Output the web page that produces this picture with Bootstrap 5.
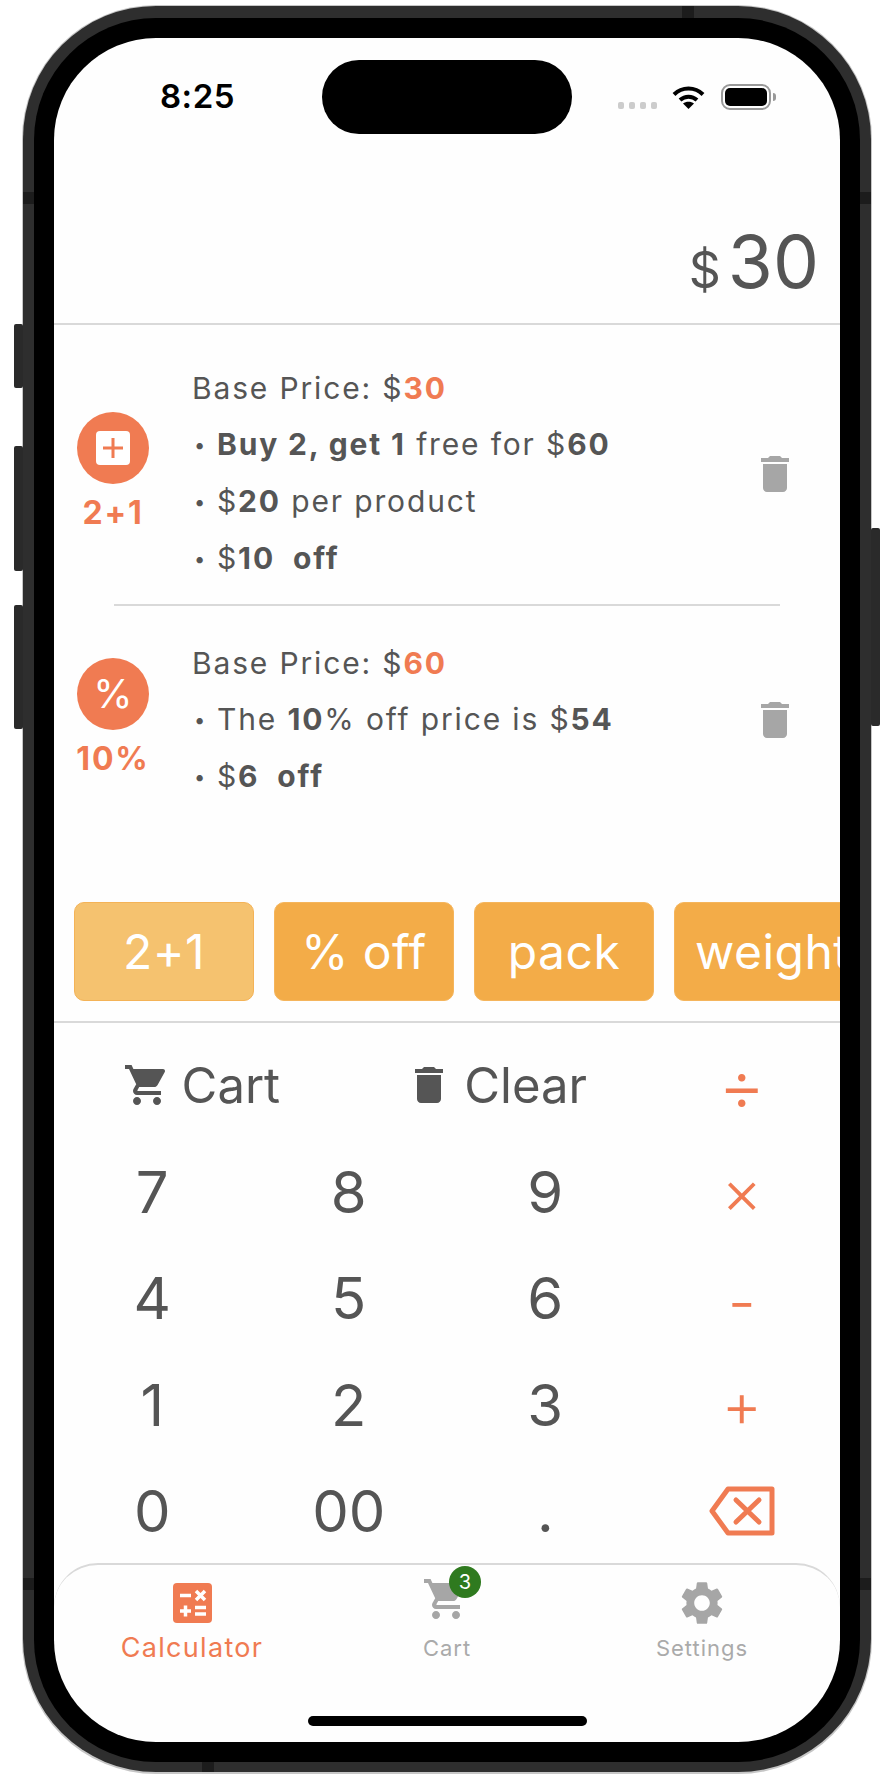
<!DOCTYPE html>
<html lang="en">
<head>
    <meta charset="UTF-8">
    <meta name="viewport" content="width=device-width, initial-scale=1.0">
    <title>Discount Calculator</title>
    <link href="https://cdn.jsdelivr.net/npm/bootstrap@5.3.0/dist/css/bootstrap.min.css" rel="stylesheet">
    <style>
        body {
            background: #fff;
            font-family: "Inter", "Liberation Sans", sans-serif;
            color: #555;
        }
        /* phone frame */
        .phone-edge {
            position: relative;
            width: 850px;
            height: 1769px;
            margin: 5px auto 0;
            padding: 1px 1px 2px;
            background: #c6c6c6;
            border-radius: 134px;
        }
        .phone-band {
            height: 100%;
            padding: 12px 11px 10px;
            background: #2e2e2e;
            border-radius: 133px;
        }
        .phone-black {
            height: 100%;
            padding: 20px;
            background: #000;
            border-radius: 122px;
        }
        .phone-screen {
            height: 100%;
            background: #fefefe;
            border-radius: 102px;
            overflow: hidden;
        }
        .side-key {
            position: absolute;
            width: 9px;
            background: #2a2a2a;
            border-radius: 2px;
        }
        .antenna {
            position: absolute;
            background: #1c1c1c;
        }
        /* status bar */
        .status-row {
            height: 74px;
            margin-top: 22px;
        }
        .status-left {
            width: 268px;
            padding-left: 106px;
            font-size: 33px;
            font-weight: 600;
            letter-spacing: .5px;
            color: #000;
        }
        .island {
            width: 250px;
            height: 74px;
            background: #000;
            border-radius: 37px;
        }
        .status-right {
            margin-left: 46px;
        }
        .sig-dot {
            width: 6px;
            height: 7px;
            background: #ccc;
            border-radius: 2px;
        }
        .sig-dots {
            gap: 5px;
            margin: 16px 15px 0 0;
        }
        .batt-body {
            width: 50px;
            height: 26px;
            padding: 2px;
            border: 2px solid #999;
            border-radius: 9px;
        }
        .batt-fill {
            height: 100%;
            background: #000;
            border-radius: 5px;
        }
        .batt-tip {
            width: 3px;
            height: 8px;
            margin-left: 2px;
            background: #999;
            border-radius: 0 3px 3px 0;
        }
        /* total */
        .total-row {
            height: 191px;
            padding: 91px 21px 0 0;
            border-bottom: 2px solid #d9d9d9;
        }
        .total-cur {
            margin-right: 7px;
            font-size: 50px;
            line-height: 1;
        }
        .total-num {
            font-size: 73px;
            line-height: 1;
        }
        /* discount list */
        .price-list {
            height: 556px;
            padding-top: 35px;
            font-size: 30px;
            line-height: 56px;
            letter-spacing: 1.85px;
        }
        .price-item {
            padding-right: 41px;
        }
        .price-item b {
            font-weight: 700;
        }
        .price-hot {
            color: #f07b52;
            font-weight: 700;
        }
        .type-col {
            width: 116px;
            margin: 0 21px 5px 1px;
        }
        .type-circle {
            width: 72px;
            height: 72px;
            background: #f07b52;
            color: #fff;
            font-size: 40px;
            line-height: 1;
            letter-spacing: 0;
        }
        .type-name {
            margin-top: 11px;
            font-size: 32px;
            color: #f07b52;
            font-weight: 700;
            line-height: 36px;
        }
        .item-line {
            height: 2px;
            margin: 17px 60px 29px;
            background: #d9d9d9;
        }
        .bullet {
            display: inline-block;
            width: 25px;
            padding-left: 2px;
            font-size: 20px;
            vertical-align: 3px;
        }
        /* discount buttons */
        .type-btns {
            height: 142px;
            padding: 21px 0 0 20px;
            gap: 20px;
            border-bottom: 2px solid #d9d9d9;
            overflow: hidden;
        }
        .type-btn {
            flex: 0 0 180px;
            height: 99px;
            padding: 0;
            font-size: 48px;
            line-height: 1;
            letter-spacing: .5px;
            color: #fff;
            background: #f3ac48;
            border: 1px solid #f5b55c;
            border-radius: 10px;
            white-space: nowrap;
            overflow: hidden;
        }
        .type-btn.btn-clip {
            text-align: left;
            padding-left: 20px;
        }
        .type-btn.btn-soft {
            background: #f5c26f;
            border-color: #f4b357;
        }
        /* keypad */
        .key-pad {
            padding-top: 9px;
        }
        .key-cell {
            height: 106.5px;
            font-size: 58px;
            line-height: 1;
        }
        .key-action {
            font-size: 49px;
            gap: 11px;
        }
        .key-op {
            font-size: 62px;
            font-weight: 350;
            color: #f07b52;
        }
        .op-div {
            font-size: 72px;
        }
        .op-minus {
            padding-top: 7px;
        }
        /* tab bar */
        .tab-bar {
            height: 180px;
            margin-top: -2px;
            padding-top: 12px;
            border-top: 2px solid #d9d9d9;
            border-radius: 44px 44px 0 0;
        }
        .tab-item {
            width: 255px;
            font-size: 22px;
            letter-spacing: 1px;
            color: #aaa;
        }
        .tab-on {
            font-size: 27px;
            letter-spacing: 1.3px;
            color: #f07b52;
        }
        .tab-icon {
            height: 52px;
        }
        .tab-text {
            margin-top: 1px;
            line-height: 36px;
        }
        .cart-icon {
            display: block;
            margin: -2px 0 0 -2px;
        }
        .cart-count {
            top: -11px;
            left: 25px;
            width: 32px;
            height: 32px;
            background: #2f7a1f;
            color: #fff;
            font-size: 20px;
            letter-spacing: 0;
        }
        .home-bar {
            width: 279px;
            height: 10px;
            margin: 0 auto;
            background: #000;
            border-radius: 5px;
        }
        .home-wrap {
            padding-top: 50px;
        }
    </style>
</head>
<body>
    <div class="phone-edge">
        <!-- side keys -->
        <div class="side-key" style="left:-8px;top:319px;height:64px"></div>
        <div class="side-key" style="left:-8px;top:441px;height:125px"></div>
        <div class="side-key" style="left:-8px;top:600px;height:124px"></div>
        <div class="side-key" style="right:-8px;top:523px;height:198px"></div>
        <!-- antenna lines -->
        <div class="antenna" style="left:660px;top:1px;width:12px;height:12px"></div>
        <div class="antenna" style="left:180px;bottom:2px;width:12px;height:10px"></div>
        <div class="antenna" style="left:1px;top:187px;width:11px;height:12px"></div>
        <div class="antenna" style="right:1px;top:187px;width:11px;height:12px"></div>
        <div class="antenna" style="left:1px;top:1573px;width:11px;height:12px"></div>
        <div class="antenna" style="right:1px;top:1573px;width:11px;height:12px"></div>

        <div class="phone-band">
            <div class="phone-black">
                <div class="phone-screen d-flex flex-column">
                    <!-- status bar -->
                    <div class="status-row d-flex align-items-center flex-shrink-0">
                        <div class="status-left">8:25</div>
                        <div class="island"></div>
                        <div class="status-right d-flex align-items-center">
                            <div class="sig-dots d-flex">
                                <span class="sig-dot"></span><span class="sig-dot"></span><span class="sig-dot"></span><span class="sig-dot"></span>
                            </div>
                            <svg width="33" height="24" viewBox="0 0 33 24" class="me-3">
                                <path d="M2 9.5C10 1.5 23 1.5 31 9.5" fill="none" stroke="#000" stroke-width="4"/>
                                <path d="M8 15C13 10.500 20 10.500 25 15" fill="none" stroke="#000" stroke-width="4"/>
                                <path d="M16.500 24L11 18.500C14 16 19 16 22 18.500Z" fill="#000"/>
                            </svg>
                            <div class="batt-body"><div class="batt-fill"></div></div>
                            <div class="batt-tip"></div>
                        </div>
                    </div>

                    <!-- total -->
                    <div class="total-row d-flex justify-content-end align-items-baseline flex-shrink-0">
                        <span class="total-cur">$</span><span class="total-num">30</span>
                    </div>

                    <!-- discounts -->
                    <div class="price-list flex-shrink-0">
                        <div class="price-item d-flex align-items-center">
                            <div class="type-col d-flex flex-column align-items-center flex-shrink-0">
                                <div class="type-circle rounded-circle d-flex align-items-center justify-content-center">
                                    <svg width="34" height="34" viewBox="0 0 34 34">
                                        <rect width="34" height="34" rx="4" fill="#fff"/>
                                        <path d="M17 7V27M7 17H27" stroke="#f07b52" stroke-width="3"/>
                                    </svg>
                                </div>
                                <div class="type-name">2+1</div>
                            </div>
                            <div class="flex-grow-1">
                                <div>Base Price: $<span class="price-hot">30</span></div>
                                <div><span class="bullet">•</span><b>Buy 2, get 1</b> free for $<b>60</b></div>
                                <div><span class="bullet">•</span>$<b>20</b> per product</div>
                                <div><span class="bullet">•</span>$<b>10&nbsp; off</b></div>
                            </div>
                            <svg width="48" height="48" viewBox="0 0 24 24" fill="#a6a6a6">
                                <path d="M6 19c0 1.100.9 2 2 2h8c1.100 0 2-.9 2-2V7H6v12zM19 4h-3.500l-1-1h-5l-1 1H5v2h14V4z"/>
                            </svg>
                        </div>
                        <div class="item-line"></div>
                        <div class="price-item d-flex align-items-center">
                            <div class="type-col d-flex flex-column align-items-center flex-shrink-0">
                                <div class="type-circle rounded-circle d-flex align-items-center justify-content-center">%</div>
                                <div class="type-name">10%</div>
                            </div>
                            <div class="flex-grow-1">
                                <div>Base Price: $<span class="price-hot">60</span></div>
                                <div><span class="bullet">•</span>The <b>10</b>% off price is $<b>54</b></div>
                                <div><span class="bullet">•</span>$<b>6&nbsp; off</b></div>
                            </div>
                            <svg width="48" height="48" viewBox="0 0 24 24" fill="#a6a6a6">
                                <path d="M6 19c0 1.100.9 2 2 2h8c1.100 0 2-.9 2-2V7H6v12zM19 4h-3.500l-1-1h-5l-1 1H5v2h14V4z"/>
                            </svg>
                        </div>
                    </div>

                    <!-- discount types -->
                    <div class="type-btns d-flex align-items-start flex-shrink-0">
                        <button type="button" class="btn type-btn btn-soft">2+1</button>
                        <button type="button" class="btn type-btn">% off</button>
                        <button type="button" class="btn type-btn">pack</button>
                        <button type="button" class="btn type-btn btn-clip">weight</button>
                    </div>

                    <!-- keypad -->
                    <div class="key-pad flex-shrink-0">
                        <div class="row g-0">
                            <div class="col-9 d-flex">
                                <div class="w-50 key-cell key-action d-flex align-items-center justify-content-center">
                                    <svg width="48" height="48" viewBox="0 0 24 24" fill="#555">
                                        <path d="M7 18c-1.100 0-1.990.9-1.990 2S5.900 22 7 22s2-.9 2-2-.9-2-2-2zM1 2v2h2l3.600 7.590-1.350 2.450c-.16.28-.25.61-.25.96 0 1.100.9 2 2 2h12v-2H7.420c-.14 0-.25-.11-.25-.25l.03-.12.9-1.630h7.450c.75 0 1.410-.41 1.750-1.030l3.580-6.490c.08-.14.12-.31.12-.48 0-.55-.45-1-1-1H5.210l-.94-2H1zm16 16c-1.100 0-1.990.9-1.990 2s.89 2 1.990 2 2-.9 2-2-.9-2-2-2z"/>
                                    </svg>
                                    <span>Cart</span>
                                </div>
                                <div class="w-50 key-cell key-action d-flex align-items-center justify-content-center">
                                    <svg width="48" height="48" viewBox="0 0 24 24" fill="#555">
                                        <path d="M6 19c0 1.100.9 2 2 2h8c1.100 0 2-.9 2-2V7H6v12zM19 4h-3.500l-1-1h-5l-1 1H5v2h14V4z"/>
                                    </svg>
                                    <span>Clear</span>
                                </div>
                            </div>
                            <div class="col-3 key-cell key-op op-div d-flex align-items-center justify-content-center">÷</div>

                            <div class="col-3 key-cell d-flex align-items-center justify-content-center">7</div>
                            <div class="col-3 key-cell d-flex align-items-center justify-content-center">8</div>
                            <div class="col-3 key-cell d-flex align-items-center justify-content-center">9</div>
                            <div class="col-3 key-cell key-op d-flex align-items-center justify-content-center">×</div>

                            <div class="col-3 key-cell d-flex align-items-center justify-content-center">4</div>
                            <div class="col-3 key-cell d-flex align-items-center justify-content-center">5</div>
                            <div class="col-3 key-cell d-flex align-items-center justify-content-center">6</div>
                            <div class="col-3 key-cell key-op op-minus d-flex align-items-center justify-content-center">-</div>

                            <div class="col-3 key-cell d-flex align-items-center justify-content-center">1</div>
                            <div class="col-3 key-cell d-flex align-items-center justify-content-center">2</div>
                            <div class="col-3 key-cell d-flex align-items-center justify-content-center">3</div>
                            <div class="col-3 key-cell key-op d-flex align-items-center justify-content-center">+</div>

                            <div class="col-3 key-cell d-flex align-items-center justify-content-center">0</div>
                            <div class="col-3 key-cell d-flex align-items-center justify-content-center">00</div>
                            <div class="col-3 key-cell d-flex align-items-center justify-content-center">.</div>
                            <div class="col-3 key-cell d-flex align-items-center justify-content-center">
                                <svg width="66" height="50" viewBox="0 0 66 50" fill="none" stroke="#f07b52" stroke-width="5" stroke-linejoin="round" stroke-linecap="round">
                                    <path d="M19 3H63V47H19L3 25Z"/>
                                    <path d="M27 14L50 36M50 14L27 36"/>
                                </svg>
                            </div>
                        </div>
                    </div>

                    <!-- tab bar -->
                    <div class="tab-bar flex-grow-1">
                        <div class="d-flex justify-content-center">
                            <div class="tab-item tab-on d-flex flex-column align-items-center">
                                <div class="tab-icon d-flex align-items-center">
                                    <svg width="39" height="40" viewBox="0 0 39 40">
                                        <rect width="39" height="40" rx="4" fill="#f07b52"/>
                                        <path d="M7 12.500H18M23 8L32 17M32 8L23 17M7 28H18M12.500 22.500V33.500M22 24.500H33M22 31H33" stroke="#fff" stroke-width="3.500"/>
                                    </svg>
                                </div>
                                <div class="tab-text">Calculator</div>
                            </div>
                            <div class="tab-item d-flex flex-column align-items-center">
                                <div class="tab-icon position-relative">
                                    <svg class="cart-icon" width="48" height="48" viewBox="0 0 24 24" fill="#a6a6a6">
                                        <path d="M7 18c-1.100 0-1.990.9-1.990 2S5.900 22 7 22s2-.9 2-2-.9-2-2-2zM1 2v2h2l3.600 7.590-1.350 2.450c-.16.28-.25.61-.25.96 0 1.100.9 2 2 2h12v-2H7.420c-.14 0-.25-.11-.25-.25l.03-.12.9-1.630h7.450c.75 0 1.410-.41 1.750-1.030l3.580-6.490c.08-.14.12-.31.12-.48 0-.55-.45-1-1-1H5.210l-.94-2H1zm16 16c-1.100 0-1.990.9-1.990 2s.89 2 1.990 2 2-.9 2-2-.9-2-2-2z"/>
                                    </svg>
                                    <span class="cart-count position-absolute rounded-circle d-flex align-items-center justify-content-center">3</span>
                                </div>
                                <div class="tab-text">Cart</div>
                            </div>
                            <div class="tab-item d-flex flex-column align-items-center">
                                <div class="tab-icon">
                                    <svg width="52" height="52" viewBox="0 0 24 24" fill="#a6a6a6">
                                        <path d="M19.140 12.940c.04-.3.06-.61.06-.94 0-.32-.02-.64-.07-.94l2.030-1.580c.18-.14.23-.41.12-.61l-1.920-3.320c-.12-.22-.37-.29-.59-.22l-2.390.96c-.5-.38-1.030-.7-1.620-.94l-.36-2.540c-.04-.24-.24-.41-.48-.41h-3.840c-.24 0-.43.17-.47.41l-.36 2.540c-.59.24-1.130.57-1.620.94l-2.390-.96c-.22-.08-.47 0-.59.22L2.740 8.870c-.12.21-.08.47.12.61l2.030 1.580c-.05.3-.09.63-.09.94s.02.64.07.94l-2.030 1.580c-.18.14-.23.41-.12.61l1.920 3.320c.12.22.37.29.59.22l2.390-.96c.5.38 1.030.7 1.620.94l.36 2.540c.05.24.24.41.48.41h3.840c.24 0 .44-.17.47-.41l.36-2.540c.59-.24 1.130-.56 1.620-.94l2.390.96c.22.08.47 0 .59-.22l1.920-3.320c.12-.22.07-.47-.12-.61l-2.010-1.580zM12 15.600c-1.980 0-3.600-1.620-3.600-3.600s1.620-3.600 3.600-3.600 3.600 1.620 3.600 3.600-1.620 3.600-3.600 3.600z"/>
                                    </svg>
                                </div>
                                <div class="tab-text">Settings</div>
                            </div>
                        </div>
                        <div class="home-wrap"><div class="home-bar"></div></div>
                    </div>
                </div>
            </div>
        </div>
    </div>
    <script src="https://cdn.jsdelivr.net/npm/bootstrap@5.3.0/dist/js/bootstrap.bundle.min.js"></script>
</body>
</html>
